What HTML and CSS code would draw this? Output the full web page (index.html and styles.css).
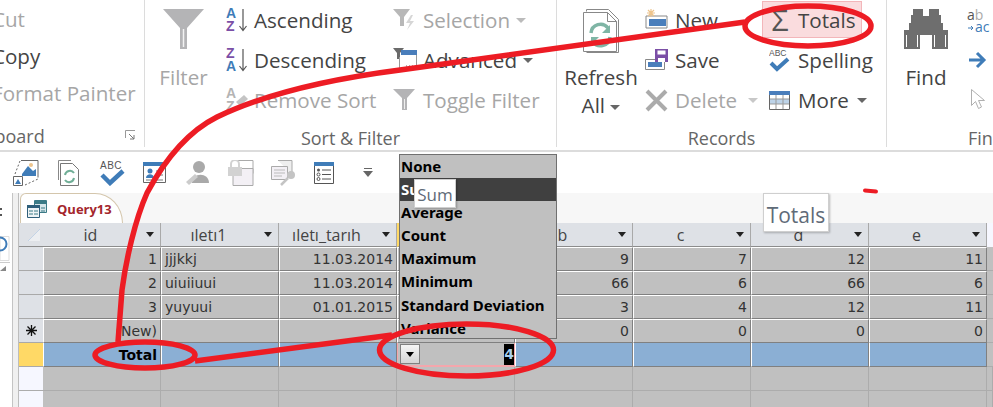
FILE: index.html
```html
<!DOCTYPE html>
<html lang="en">
<head>
  <meta charset="UTF-8" />
  <title>Query13</title>
  <link rel="stylesheet" href="styles.css">
</head>
<body>
  <div class="ribbon">
    <section class="group clipboard">
      <div class="group-body">
        <div class="col">
          <div class="cmd off">Cut</div>
          <div class="cmd">Copy</div>
          <div class="cmd off">Format Painter</div>
        </div>
      </div>
      <div class="group-label">
        <span>Clipboard</span>
        <svg class="launcher" viewBox="0 0 11 11"><path d="M.5 8V.5H10" fill="none" stroke="#999"/><path d="M4 4l5 5M9 5v4H5" fill="none" stroke="#777"/></svg>
      </div>
    </section>

    <section class="group sort">
      <div class="group-body">
        <div class="big off filter-btn">
          <div class="big-icon">
            <svg width="41" height="40" viewBox="0 0 41 40"><path d="M0 0h41L24 19v21h-7V19z" fill="#b4b4b6"/><path d="M20.5 20v18" stroke="#f2f2f2" stroke-width="1.5"/></svg>
          </div>
          <div class="big-label">Filter</div>
        </div>
        <div class="col sort-col">
          <div class="cmd">
            <svg class="ico" width="22" height="26" viewBox="0 0 22 26"><text x="0" y="11" class="az blue">A</text><text x="0" y="24" class="az purple">Z</text><path d="M17 2v21M13.500 19l3.500 4.500 3.500-4.500" fill="none" stroke="#555" stroke-width="1.200"/></svg>
            Ascending
          </div>
          <div class="cmd">
            <svg class="ico" width="22" height="26" viewBox="0 0 22 26"><text x="0" y="11" class="az purple">Z</text><text x="0" y="24" class="az blue">A</text><path d="M17 2v21M13.500 19l3.500 4.500 3.500-4.500" fill="none" stroke="#555" stroke-width="1.200"/></svg>
            Descending
          </div>
          <div class="cmd off">
            <svg class="ico" width="22" height="26" viewBox="0 0 22 26"><text x="0" y="11" class="az grey">A</text><text x="0" y="24" class="az grey">Z</text><path d="M10 15l8-7 4 4-8 7z" fill="#c4c4c4"/></svg>
            Remove Sort
          </div>
        </div>
        <div class="col filter-col">
          <div class="cmd off">
            <svg class="ico" width="24" height="22" viewBox="0 0 24 22"><path d="M0 0h17l-6 8v9H7V8z" fill="#b8b8b8"/><path d="M18 6l-5 8h4l-3 7 7-9h-4l3-6z" fill="#d6d6d6"/></svg>
            Selection <i class="caret"></i>
          </div>
          <div class="cmd">
            <svg class="ico" width="24" height="24" viewBox="0 0 24 24"><path d="M0 0h11L7 5v6H4V5z" fill="#6a6a6a"/><path d="M8 2h16v5H8z" fill="#4a7ebb"/><path d="M6.500 9v11.500h17V7" fill="#fff" stroke="#999"/><path d="M13 18h1M16 18h1M19 18h1" stroke="#666"/></svg>
            Advanced <i class="caret dark"></i>
          </div>
          <div class="cmd off">
            <svg class="ico" width="24" height="22" viewBox="0 0 24 22"><path d="M0 0h22L14 9v12H9V9z" fill="#b4b4b6"/><path d="M11.500 10v10" stroke="#eee"/></svg>
            Toggle Filter
          </div>
        </div>
      </div>
      <div class="group-label center">Sort &amp; Filter</div>
    </section>

    <section class="group records">
      <div class="group-body">
        <div class="big refresh-btn">
          <div class="big-icon">
            <svg width="36" height="44" viewBox="0 0 36 44"><path d="M3.500 2.500V.5h22l10 10v33H3.500" fill="none" stroke="#888"/><path d="M.5 3.500h24l9 9v30H.5z" fill="#fff" stroke="#888"/><path d="M24.500 3.500v9h9" fill="none" stroke="#888"/><path d="M8 24a9.500 9.500 0 0 1 17-5" fill="none" stroke="#7fb5a5" stroke-width="3.500"/><path d="M27 16v8h-8z" fill="#7fb5a5"/><path d="M27 28a9.500 9.500 0 0 1-17 5" fill="none" stroke="#7fb5a5" stroke-width="3.500"/><path d="M8 36v-8h8z" fill="#7fb5a5"/></svg>
          </div>
          <div class="big-label">Refresh<br>All <i class="caret dark"></i></div>
        </div>
        <div class="col new-col">
          <div class="cmd">
            <svg class="ico" width="23" height="22" viewBox="0 0 23 22"><path d="M1 20V8h21v12z" fill="#fff" stroke="#888" transform="translate(0 -1)"/><path d="M4 10h17v7H4z" fill="#4a7ebb"/><path d="M6 0v8M2 4h8M3 1l6 6M9 1L3 7" stroke="#edc48d" stroke-width="1.200"/></svg>
            New
          </div>
          <div class="cmd">
            <svg class="ico" width="23" height="22" viewBox="0 0 23 22"><path d="M.5 10.500h19v10H.5z" fill="#fff" stroke="#888"/><path d="M3 13h14v5H3z" fill="#4a7ebb"/><path d="M10 0h13v13H10z" fill="#7b4fa6"/><path d="M12.500 1.500h8v4h-8zM13 9h7v4h-7z" fill="#fff"/></svg>
            Save
          </div>
          <div class="cmd off">
            <svg class="ico" width="23" height="23" viewBox="0 0 23 23"><path d="M2 2l19 19M21 2L2 21" stroke="#ababab" stroke-width="4"/></svg>
            Delete <i class="caret light"></i>
          </div>
        </div>
        <div class="col totals-col">
          <div class="cmd totals"><span class="sigma">Σ</span> Totals</div>
          <div class="cmd">
            <svg class="ico" width="21" height="26" viewBox="0 0 21 26"><text x="0" y="9" class="abc">ABC</text><path d="M2 16l6 6 11-10" fill="none" stroke="#3f7cb8" stroke-width="4"/></svg>
            Spelling
          </div>
          <div class="cmd">
            <svg class="ico" width="21" height="19" viewBox="0 0 21 19"><path d="M.5.5h20v18H.5z" fill="#fff" stroke="#666"/><path d="M0 0h21v4H0z" fill="#4a7ebb"/><path d="M1 8h19v5H1z" fill="#bdd3e8"/><path d="M1 8h19M1 13h19M7 4v14M14 4v14" stroke="#999" fill="none"/></svg>
            More <i class="caret dark"></i>
          </div>
        </div>
      </div>
      <div class="group-label center">Records</div>
    </section>

    <section class="group find">
      <div class="group-body">
        <div class="big find-btn">
          <div class="big-icon">
            <svg width="44" height="40" viewBox="0 0 44 40"><path d="M9 0h10v7h6V0h10v6h2v8h2v7h5v19H28V26H16v14H0V21h5v-7h2V6h2z" fill="#6e6e6e"/><path d="M2.500 38V26M13.500 38V26M30.500 38V26M41.500 38V26" stroke="#fff"/></svg>
          </div>
          <div class="big-label">Find</div>
        </div>
        <div class="col find-col">
          <div class="find-item">
            <svg width="24" height="24" viewBox="0 0 24 24"><text x="0" y="12" class="ab">a<tspan fill="#aaa">b</tspan></text><text x="8" y="24" class="ab bluetext">ac</text><path d="M1 20h5M4 18l2 2-2 2" stroke="#3f7cb8" fill="none"/></svg>
          </div>
          <div class="find-item">
            <svg width="24" height="20" viewBox="0 0 24 20"><path d="M2 10h14M10 3l7 7-7 7" fill="none" stroke="#3f7cb8" stroke-width="3"/></svg>
          </div>
          <div class="find-item">
            <svg width="24" height="24" viewBox="0 0 24 24"><path d="M4.500 1.500v16l4-4 3 7 3-1.500-3-6.500h6z" fill="#fff" stroke="#b0b0b0"/></svg>
          </div>
        </div>
      </div>
      <div class="group-label find-label">Find</div>
    </section>
  </div>

  <div class="qat">
    <svg width="26" height="26" viewBox="0 0 26 26"><path d="M8 .5h17v17" fill="#fff" stroke="#666"/><path d="M9 14l6-8 5 5 3-2v7H9z" fill="#3f7cb8"/><circle cx="18" cy="5" r="2" fill="#edc48d"/><path d="M.5 16.500h9v9h-9z" fill="#fff" stroke="#666"/><path d="M2 24l3-5 3 5z" fill="#3f7cb8"/><path d="M2 14l5-13M12 25l13-6" stroke="#666" stroke-dasharray="2 2"/></svg>
    <svg width="26" height="26" viewBox="0 0 26 26"><path d="M2.500 20V.5H15" fill="none" stroke="#888"/><path d="M4.500 3.500h12l6 6v16h-18z" fill="#fff" stroke="#777"/><path d="M9 15a5 5 0 0 1 9-2M18 18a5 5 0 0 1-9 2" fill="none" stroke="#6fae96" stroke-width="2"/></svg>
    <svg width="26" height="26" viewBox="0 0 26 26"><text x="1" y="9" class="abc big-abc">ABC</text><path d="M3 15l8 8 13-12" fill="none" stroke="#3f7cb8" stroke-width="4.500"/></svg>
    <svg width="26" height="26" viewBox="0 0 26 26"><path d="M1.500 2.500h22v20h-22z" fill="#fff" stroke="#666"/><path d="M1 2h23v4H1z" fill="#3f7cb8"/><circle cx="8" cy="11" r="2.500" fill="#3f7cb8"/><path d="M4 18c0-5 8-5 8 0z" fill="#3f7cb8"/><path d="M14 11h7M14 15h7M4 20h17" stroke="#777"/></svg>
    <svg width="26" height="26" viewBox="0 0 26 26"><circle cx="14" cy="7" r="6" fill="#a9a9a9"/><path d="M7 23c0-11 17-11 17 0z" fill="#a9a9a9"/><path d="M1 22l9-8 3 3-9 8z" fill="#ccc"/></svg>
    <svg width="26" height="26" viewBox="0 0 26 26"><path d="M9 .5h16v13" fill="#fff" stroke="#aaa"/><path d="M5 8.500h20v17H5z" fill="#f3f0f5" stroke="#aaa"/><path d="M0 7h14v9H0z" fill="#d2d2d2"/><path d="M3 7V4a4 4 0 0 1 8 0v3" fill="none" stroke="#d2d2d2" stroke-width="2"/></svg>
    <svg width="26" height="26" viewBox="0 0 26 26"><path d="M7 .5h14v14" fill="#eee" stroke="#aaa"/><path d="M.5 6.500h16v13H.5z" fill="#f3f0f5" stroke="#aaa"/><path d="M3 10h11M3 13h11M3 16h8" stroke="#bbb"/><circle cx="20" cy="15" r="4" fill="#c4c4c4"/><path d="M17 18l-7 7" stroke="#c4c4c4" stroke-width="2.500"/></svg>
    <svg width="20" height="22" viewBox="0 0 20 22"><path d="M.5.5h19v21H.5z" fill="#fff" stroke="#555"/><path d="M0 0h20v4H0z" fill="#3f7cb8"/><circle cx="4.500" cy="8" r="1.500" fill="#555"/><circle cx="4.500" cy="12.500" r="1.500" fill="none" stroke="#555"/><circle cx="4.500" cy="17" r="1.500" fill="none" stroke="#555"/><path d="M8 8h9M8 12.500h9M8 17h9" stroke="#555"/></svg>
    <svg class="qat-more" width="10" height="9" viewBox="0 0 10 9"><path d="M1 .5h8" stroke="#666"/><path d="M0 3h10L5 9z" fill="#666"/></svg>
  </div>

  <div class="workspace">
    <div class="nav">
      <svg width="12" height="214" viewBox="0 0 12 214"><path d="M0 15h2v2H0zM0 21h2v2H0z" fill="#555"/><path d="M0 43.500h9v24H0z" fill="#fff" stroke="#ddd"/><circle cx="0" cy="51" r="6.500" fill="none" stroke="#3f7cb8" stroke-width="2"/><path d="M0 69.500h10" stroke="#ccc"/><path d="M0 78l6-5v5z" fill="#888"/></svg>
    </div>
    <div class="docs">
      <div class="tabs">
        <div class="tab">
          <svg width="20" height="18" viewBox="0 0 20 18"><path d="M7.500.5h12v12h-12z" fill="#d6e6ea" stroke="#3b7a86"/><path d="M7 1h13v3H7z" fill="#3b7a86"/><path d="M.5 5.500h12v12H.5z" fill="#eef3f5" stroke="#2f5f7a"/><path d="M0 5h13v3H0z" fill="#2f5f7a"/><path d="M2 11h4M7 11h4M2 14h4M7 14h4M14 8h4M14 11h4" stroke="#3b7a86"/></svg>
          <span>Query13</span>
        </div>
      </div>
      <table class="grid">
        <colgroup>
          <col class="w-sel"><col class="w-col"><col class="w-col"><col class="w-col"><col class="w-col"><col class="w-col"><col class="w-col"><col class="w-col"><col class="w-col"><col>
        </colgroup>
        <thead>
          <tr>
            <th class="corner"><svg width="12" height="12" viewBox="0 0 12 12"><path d="M0 12L12 0v12z" fill="#eceef1"/><path d="M0 12L12 0" stroke="#c3d3e6"/></svg></th>
            <th><div class="head"><span>id</span><i class="sort-arrow"></i></div></th>
            <th><div class="head"><span>ıletı1</span><i class="sort-arrow"></i></div></th>
            <th><div class="head"><span>ıletı_tarıh</span><i class="sort-arrow"></i></div></th>
            <th class="current"><div class="head"><span>a</span><i class="sort-arrow"></i></div></th>
            <th><div class="head"><span>b</span><i class="sort-arrow"></i></div></th>
            <th><div class="head"><span>c</span><i class="sort-arrow"></i></div></th>
            <th><div class="head"><span>d</span><i class="sort-arrow"></i></div></th>
            <th><div class="head"><span>e</span><i class="sort-arrow"></i></div></th>
            <th class="filler-head"></th>
          </tr>
        </thead>
        <tbody>
          <tr class="data">
            <td class="sel"></td><td class="num">1</td><td>jjjkkj</td><td class="num">11.03.2014</td><td class="num">4</td><td class="num">9</td><td class="num">7</td><td class="num">12</td><td class="num">11</td><td class="filler"></td>
          </tr>
          <tr class="data">
            <td class="sel"></td><td class="num">2</td><td>uiuiiuui</td><td class="num">11.03.2014</td><td class="num">5</td><td class="num">66</td><td class="num">6</td><td class="num">66</td><td class="num">6</td><td class="filler"></td>
          </tr>
          <tr class="data">
            <td class="sel"></td><td class="num">3</td><td>yuyuui</td><td class="num">01.01.2015</td><td class="num">6</td><td class="num">3</td><td class="num">4</td><td class="num">12</td><td class="num">11</td><td class="filler"></td>
          </tr>
          <tr class="data">
            <td class="sel"><svg width="11" height="11" viewBox="0 0 11 11"><path d="M5.500 0v11M0 5.500h11M1.500 1.500l8 8M9.500 1.500l-8 8" stroke="#111" stroke-width="1.300"/></svg></td><td class="num">(New)</td><td></td><td></td><td class="num">0</td><td class="num">0</td><td class="num">0</td><td class="num">0</td><td class="num">0</td><td class="filler"></td>
          </tr>
          <tr class="total">
            <td class="sel-total"></td><td class="num strong">Total</td><td></td><td></td>
            <td class="active">
              <div class="active-cell">
                <span class="combo-btn"><i></i></span>
                <span class="picked">4</span>
              </div>
            </td>
            <td></td><td></td><td></td><td></td><td class="filler"></td>
          </tr>
          <tr class="empty"><td class="sel-empty"></td><td></td><td></td><td></td><td></td><td></td><td></td><td></td><td></td><td></td></tr>
          <tr class="empty"><td class="sel-empty"></td><td></td><td></td><td></td><td></td><td></td><td></td><td></td><td></td><td></td></tr>
        </tbody>
      </table>
    </div>
  </div>

  <ul class="menu">
    <li>None</li>
    <li class="hot">Sum</li>
    <li>Average</li>
    <li>Count</li>
    <li>Maximum</li>
    <li>Minimum</li>
    <li>Standard Deviation</li>
    <li>Variance</li>
  </ul>
  <div class="tip tip-sum">Sum</div>
  <div class="tip tip-totals">Totals</div>

  <!-- red marker drawn on top of the screenshot -->
  <svg class="marks" width="993" height="407" viewBox="0 0 993 407">
    <g fill="none" stroke="#ed1c24" stroke-width="5.500">
      <ellipse cx="808" cy="26" rx="63" ry="20"/>
      <path d="M745 22L400 70C330 79 265 94 217 117C185 133 162 165 147 193C135 220 126 260 122 290L118 342"/>
      <ellipse cx="145" cy="355" rx="50" ry="13"/>
      <path d="M195 361L392 335"/>
      <ellipse cx="466.500" cy="350" rx="87" ry="26"/>
      <path d="M865 190.500L876 191.500" stroke-width="4" stroke-linecap="round"/>
    </g>
  </svg>
</body>
</html>
```

FILE: styles.css
```css
* {
  box-sizing: border-box;
}

body {
  margin: 0;
  width: 993px;
  height: 407px;
  overflow: hidden;
  position: relative;
  background: #fff;
  color: #444;
  font-family: "Open Sans", "Noto Sans", sans-serif;
}

/* Ribbon */
.ribbon {
  display: flex;
  height: 152px;
  border-bottom: 2px solid #dcdcdc;
  font-size: 20.600px;
}

.group {
  display: flex;
  flex-direction: column;
  height: 147px;
  flex: none;
  border-right: 1px solid #dcdcdc;
}

.clipboard { width: 145px; }
.sort { width: 412px; }
.records { width: 330px; }
.find { flex: 1; border-right: none; min-width: 0; overflow: hidden; }

.group-body {
  display: flex;
  height: 124px;
}

.group-label {
  height: 23px;
  line-height: 28px;
  font-size: 18px;
  color: #666;
  white-space: nowrap;
}

.group-label.center { text-align: center; }
.find-label { padding-left: 81px; }

.clipboard .group-label {
  display: flex;
  justify-content: space-between;
  align-items: center;
  margin-left: -37px;
  padding-right: 8px;
}

.launcher { width: 11px; height: 11px; }

.col {
  display: flex;
  flex-direction: column;
}

.clipboard .col { margin-left: -8px; }
.clipboard .cmd { height: 37px; }

.cmd {
  display: flex;
  align-items: center;
  gap: 6px;
  height: 40px;
  white-space: nowrap;
}

.off { color: #a6a6a6; }

.ico { flex: none; }

.big {
  flex: none;
  text-align: center;
}

.big-icon {
  display: flex;
  justify-content: center;
  align-items: flex-start;
  height: 63px;
  padding-top: 9px;
}

.big-label { line-height: 28px; }

.filter-btn { width: 77px; }
.refresh-btn { width: 88px; }
.find-btn { width: 78px; }

.sort-col { width: 167px; margin-left: 4px; }
.filter-col { width: 160px; }
.new-col { width: 117px; }
.new-col .cmd { gap: 7px; }
.totals-col { width: 110px; }
.totals-col .cmd { padding-left: 7px; gap: 8px; }
.find-col { padding-left: 2px; }

.find-item {
  display: flex;
  align-items: center;
  height: 40px;
}

.cmd.totals {
  height: 37px;
  width: 100px;
  margin: 1px 0 2px;
  background: #fadcde;
  border: 1px solid #f3b6ba;
}

.sigma {
  width: 20px;
  font-size: 30px;
  line-height: 1;
  color: #555;
  text-align: center;
}

.caret {
  display: inline-block;
  border-left: 5px solid transparent;
  border-right: 5px solid transparent;
  border-top: 5px solid #bbb;
  vertical-align: middle;
}

.caret.dark { border-top-color: #666; }
.caret.light { border-top-color: #c8c8c8; margin-left: 4px; }

.az {
  font: bold 14px "Liberation Sans", sans-serif;
}

.blue { fill: #3f7cb8; }
.purple { fill: #7b4fa6; }
.grey { fill: #b4b4b4; }

.abc {
  font: 8.500px "Liberation Sans", sans-serif;
  fill: #555;
}

.big-abc { font-size: 10px; letter-spacing: .5px; }

.ab {
  font: 14px "Open Sans", sans-serif;
  fill: #555;
}

.bluetext { fill: #3f7cb8; }

/* Quick access bar */
.qat {
  display: flex;
  align-items: center;
  gap: 17px;
  height: 41px;
  padding-left: 13px;
}

.qat-more { margin-left: 12px; }

/* Document area */
.workspace {
  display: flex;
  height: 214px;
}

.nav {
  flex: none;
  width: 19px;
  background: #f0f0f0;
  border-right: 1px solid #bdbdbd;
}

.nav svg {
  display: block;
  background: #fff;
  box-shadow: 1px 0 0 #c4c4c4;
}

.docs {
  flex: 1;
  min-width: 0;
  background: #c0c0c0;
}

.tabs {
  height: 30px;
  background: #f7f7f7;
  padding-left: 1px;
}

.tab {
  display: flex;
  align-items: center;
  gap: 10px;
  width: 103px;
  height: 30px;
  padding: 0 0 0 6px;
  background: #fff;
  border: 1px solid #d4c6ac;
  border-bottom: none;
  border-radius: 6px 28px 0 0 / 6px 30px 0 0;
  font: bold 13px "Open Sans", sans-serif;
  color: #a4262c;
}

.grid {
  width: 974px;
  table-layout: fixed;
  border-collapse: separate;
  border-spacing: 0;
  font: 14px "DejaVu Sans", sans-serif;
  color: #333;
}

.w-sel { width: 24px; }
.w-col { width: 118px; }

.grid th,
.grid td {
  height: 24px;
  padding: 0;
}

.grid th {
  font: 16px "Open Sans", sans-serif;
  color: #444;
  background: #dee1e6;
  border-right: 1px solid #a9a9a9;
  border-bottom: 1px solid #8c8c8c;
}

.grid th.corner {
  padding-left: 9px;
  text-align: left;
  border-right: none;
}

.grid th.corner svg { display: block; }

.grid th.current { border-left: 2px solid #ffd966; }

.grid th.filler-head {
  background: #f6f7ff;
  border: none;
}

.head {
  display: flex;
  align-items: center;
  height: 23px;
  padding-right: 6px;
}

.head span {
  flex: 1;
  margin-right: 8px;
  text-align: center;
}

.sort-arrow {
  flex: none;
  width: 0;
  height: 0;
  border-left: 4px solid transparent;
  border-right: 4px solid transparent;
  border-top: 5px solid #222;
}

.data td {
  background: #c0c0c0;
  border-top: 1px solid #fff;
  border-left: 1px solid #fff;
  border-right: 1px solid #808080;
  border-bottom: 1px solid #808080;
  padding: 0 3px;
  white-space: nowrap;
  overflow: hidden;
}

.data td.sel,
.grid td.sel-total,
.grid td.sel-empty {
  padding: 0;
  text-align: center;
  border: none;
}

.data td.sel {
  background: #dee1e6;
  border-bottom: 1px solid #a9a9a9;
}

.sel svg { display: block; margin: 0 auto; }

.num { text-align: right; }
.strong { font-weight: bold; color: #000; }

.total td {
  background: #8bafd4;
  border-left: 1px solid #fff;
  border-right: 1px solid #808080;
  border-bottom: 1px solid #808080;
  padding: 0 3px;
}

.grid td.sel-total {
  background: #ffd966;
  border-bottom: 1px solid #a9a9a9;
}

.total td.active {
  padding: 0;
  background: #c0c0c0;
  border: 1px solid #f4a6ac;
  border-top: none;
  border-bottom-width: 2px;
}

.active-cell {
  display: flex;
  justify-content: space-between;
  height: 22px;
  padding: 1px 0 0 2px;
}

.combo-btn {
  display: flex;
  justify-content: center;
  align-items: center;
  width: 20px;
  height: 20px;
  background: linear-gradient(#f5f5f5, #d5d5d5);
  border: 1px solid #808080;
}

.combo-btn i {
  width: 0;
  height: 0;
  border-left: 4px solid transparent;
  border-right: 4px solid transparent;
  border-top: 5px solid #000;
}

.picked {
  width: 10px;
  line-height: 21px;
  text-align: center;
  background: #000;
  color: #a9d0ee;
  font-weight: bold;
}

.empty td {
  background: #c0c0c0;
  border-right: 1px solid #acacac;
  border-bottom: 1px solid #acacac;
}

.grid td.sel-empty {
  background: #f6f7ff;
  border-bottom: 1px solid #acacac;
}

.grid td.filler {
  background: #c0c0c0;
  border: none;
  border-bottom: 1px solid #acacac;
}

/* Dropdown and tooltips over the sheet */
.menu {
  position: absolute;
  left: 399px;
  top: 154px;
  width: 158px;
  height: 185px;
  margin: 0;
  padding: 0;
  list-style: none;
  background: #c0c0c0;
  border: 1px solid #707070;
  font: bold 15px "Noto Sans", sans-serif;
  color: #000;
}

.menu li {
  height: 23.100px;
  line-height: 23px;
  padding-left: 1px;
  white-space: nowrap;
}

.menu li.hot {
  background: #404040;
  color: #fff;
}

.tip {
  position: absolute;
  background: #fff;
  border: 1px solid #cfcfcf;
  box-shadow: 1px 1px 2px rgba(0, 0, 0, 0.25);
  color: #5f6b78;
  text-align: center;
  white-space: nowrap;
}

.tip-sum {
  left: 414px;
  top: 179px;
  width: 42px;
  height: 29px;
  line-height: 30px;
  font-size: 17px;
}

.tip-totals {
  left: 763px;
  top: 193px;
  width: 66px;
  height: 39px;
  line-height: 42px;
  font-size: 21px;
}

.marks {
  position: absolute;
  left: 0;
  top: 0;
  pointer-events: none;
}
```
